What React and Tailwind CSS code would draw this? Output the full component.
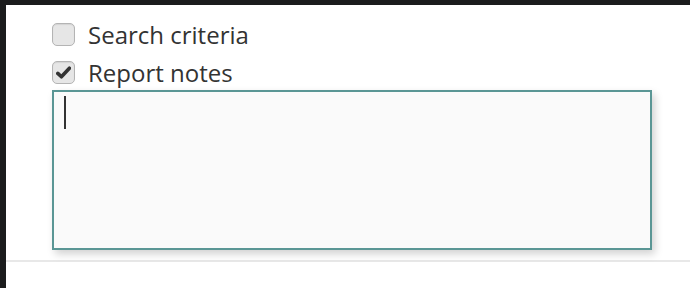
import { useState } from "react";

const Check = ({ checked, onChange, label }) => {
    return (
        <label className="flex items-center gap-[13px] h-[38px] cursor-pointer select-none">
            <span
                onClick={onChange}
                className="w-[23px] h-[23px] rounded-[5px] border border-[#b4b4b4] bg-[#e6e6e6] flex items-center justify-center shadow-[inset_0_1px_1px_rgba(0,0,0,0.08)]"
            >
                {checked && (
                    <svg width="15" height="13" viewBox="0 0 15 13">
                        <path d="M1.8 7.4 L5.4 10.8 L13.4 2.2" fill="none" stroke="#333333" strokeWidth="3.6" strokeLinecap="round" strokeLinejoin="round" />
                    </svg>
                )}
            </span>
            <span className="text-[24px] text-[#333333] leading-none pt-[2px]">{label}</span>
        </label>
    );
};

const App = () => {
    const [search, setSearch] = useState(false);
    const [notes, setNotes] = useState(true);
    const [text, setText] = useState("");

    return (
        <div className="w-[690px] h-[288px] bg-[#1b1c1d] pt-[5px] pl-[6px] overflow-hidden" style={{ fontFamily: '"Open Sans", "Noto Sans", sans-serif' }}>
            <div className="bg-white h-full flex flex-col">
                <div className="pl-[46px] pt-[10px] pr-[38px]">
                    <Check checked={search} onChange={() => setSearch(!search)} label="Search criteria" />
                    <Check checked={notes} onChange={() => setNotes(!notes)} label="Report notes" />
                    {notes && (
                        <div className="relative mt-[-1px]">
                            <textarea
                                value={text}
                                onChange={(e) => setText(e.target.value)}
                                className="block w-[600px] h-[160px] border-2 border-[#5a9695] bg-[#fafafa] resize-none outline-none shadow-[3px_4px_8px_rgba(0,0,0,0.18)] px-[11px] py-[6px] text-[22px]"
                            />
                            {/* caret drawn as in the capture */}
                            <span className="absolute left-[12px] top-[6px] w-[2px] h-[33px] bg-[#333333]" />
                        </div>
                    )}
                </div>
                <div className="mt-[10px] h-[2px] bg-[#e8e8e8]" />
            </div>
        </div>
    );
};

export default App;
